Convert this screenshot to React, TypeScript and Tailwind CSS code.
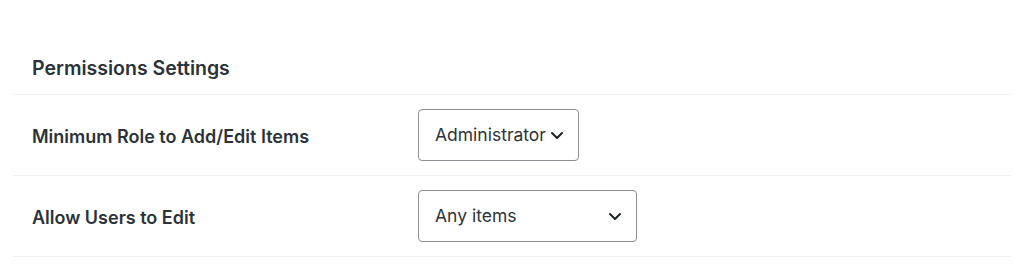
import React from 'react';

// --- ICONS ---

const ChevronDown = () => (
    <svg width="14" height="14" viewBox="0 0 14 14" fill="none" stroke="currentColor" strokeWidth="2" strokeLinecap="round" strokeLinejoin="round" aria-hidden="true">
        <path d="M2 5l5 5 5-5" />
    </svg>
);

// --- Select-like box ---
const SelectBox: React.FC<{ value: string; width: string }> = ({ value, width }) => (
    <div
        className={`${width} h-[52px] flex items-center justify-between gap-[4px] pl-[16px] pr-[14px] border border-[#8c8f94] rounded-[4px] bg-white text-[17.5px] text-[#2c3338]`}
    >
        <span>{value}</span>
        <span className="text-[#1d2327]">
            <ChevronDown />
        </span>
    </div>
);

// --- Settings row ---
const SettingRow: React.FC<{ label: string; children: React.ReactNode }> = ({ label, children }) => (
    <div className="h-[81px] flex items-center border-t border-[#f0f0f1]">
        <div className="w-[405px] pl-[19px] pt-[2px] text-[18px] font-semibold text-[#2c3338]">{label}</div>
        <div>{children}</div>
    </div>
);

export default function App() {
    return (
        <div className="w-full h-[270px] bg-white font-['Inter',sans-serif]">
            <div className="mx-[13px] pt-[56px]">
                <h2 className="pl-[19px] h-[38px] text-[19.5px] leading-6 font-semibold text-[#2c3338]">
                    Permissions Settings
                </h2>

                <SettingRow label="Minimum Role to Add/Edit Items">
                    <SelectBox value="Administrator" width="w-[161px]" />
                </SettingRow>

                <SettingRow label="Allow Users to Edit">
                    <SelectBox value="Any items" width="w-[219px]" />
                </SettingRow>

                <div className="border-t border-[#f0f0f1]" />
            </div>
        </div>
    );
}
